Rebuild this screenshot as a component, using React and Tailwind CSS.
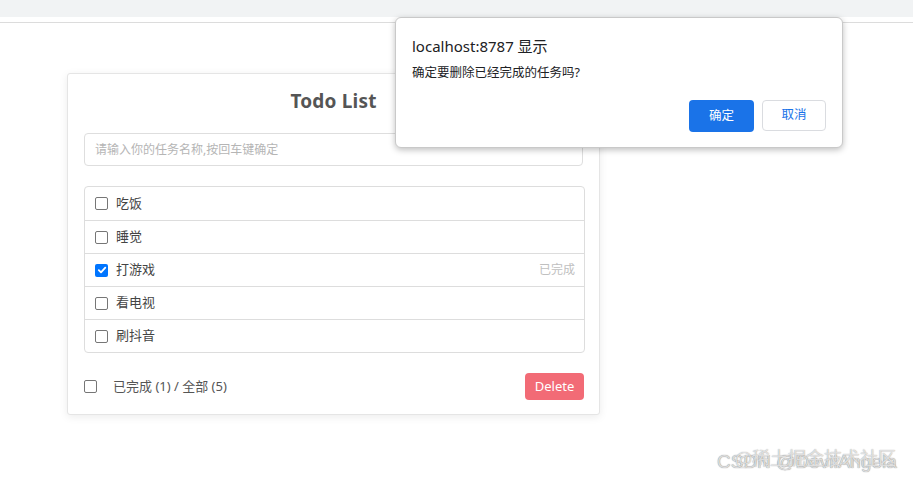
import React from "react";

const items = [
  { name: "吃饭", done: false },
  { name: "睡觉", done: false },
  { name: "打游戏", done: true },
  { name: "看电视", done: false },
  { name: "刷抖音", done: false },
];

function Box({ checked }) {
  return checked ? (
    <span className="w-[13px] h-[13px] rounded-[2px] bg-[#0075ff] flex items-center justify-center shrink-0">
      <svg width="10" height="10" viewBox="0 0 10 10">
        <path d="M1.8 5.2 L4 7.4 L8.3 2.6" fill="none" stroke="#fff" strokeWidth="1.8" strokeLinecap="round" strokeLinejoin="round" />
      </svg>
    </span>
  ) : (
    <span className="w-[13px] h-[13px] rounded-[2px] border border-[#767676] bg-white shrink-0" />
  );
}

export default function App() {
  const font = "font-['Noto_Sans','Noto_Sans_CJK_SC',sans-serif]";
  return (
    <div className={`relative w-[913px] h-[486px] bg-white overflow-hidden ${font}`}>
      <div className="h-[17px] bg-[#f1f3f4]" />
      <div className="h-[5px] bg-white" />
      <div className="h-px bg-[#dcdcdc]" />

      <div className="ml-[67px] mt-[50px] w-[533px] h-[342px] border border-[#e5e5e5] rounded-[3px] bg-white shadow-[0_2px_8px_rgba(0,0,0,0.08)] px-[16px] flex flex-col">
        <div className="h-[54px] flex items-center justify-center">
          <span className="text-[19px] font-bold text-[#555] tracking-[0.2px]">Todo List</span>
        </div>
        <div className="mt-[5px] h-[33px] w-[499px] border border-[#dedede] rounded-[4px] flex items-center px-[10px]">
          <span className="text-[12px] text-[#b5b5b5]">请输入你的任务名称,按回车键确定</span>
        </div>
        <div className="mt-[20px] w-[501px] border border-[#dddddd] rounded-[4px]">
          {items.map((it, i) => (
            <div
              key={it.name}
              className={`h-[33px] flex items-center pl-[10px] pr-[9px] ${i > 0 ? "border-t border-[#dddddd]" : ""}`}
            >
              <Box checked={it.done} />
              <span className="ml-[8px] text-[13px] text-[#444]">{it.name}</span>
              {it.done && <span className="ml-auto text-[12px] text-[#c0c0c0]">已完成</span>}
            </div>
          ))}
        </div>
        <div className="mt-[20px] flex items-center w-[501px] pr-px">
          <Box checked={false} />
          <span className="ml-[16px] text-[13px] text-[#555]">已完成 (1) / 全部 (5)</span>
          <button className="ml-auto w-[59px] h-[27px] rounded-[4px] bg-[#f26b76] text-white text-[13px] flex items-center justify-center">
            Delete
          </button>
        </div>
      </div>

      <div className="absolute left-[395px] top-[17px] w-[448px] h-[131px] bg-white border border-[#c9c9c9] rounded-[6px] shadow-[0_2px_6px_rgba(0,0,0,0.25)] px-[16px] pt-[17px] flex flex-col font-['Noto_Sans','Noto_Sans_CJK_SC',sans-serif]">
        <div className="text-[15px] leading-[22px] text-[#202124]">localhost:8787 显示</div>
        <div className="mt-[7px] text-[12.5px] leading-[18px] text-[#202124]">确定要删除已经完成的任务吗?</div>
        <div className="mt-[18px] flex justify-end gap-[8px]">
          <button className="w-[65px] h-[32px] rounded-[4px] bg-[#1a73e8] text-white text-[12.5px] flex items-center justify-center">
            确定
          </button>
          <button className="w-[64px] h-[31px] rounded-[4px] border border-[#dadce0] bg-white text-[#1a73e8] text-[12.5px] flex items-center justify-center">
            取消
          </button>
        </div>
      </div>

      <div className="absolute left-[717px] top-[449px] text-[19px] leading-[26px] text-[#dcdcdc] [text-shadow:0_0_1px_#7a7a7a] font-['Liberation_Sans','Noto_Sans_CJK_SC',sans-serif] whitespace-nowrap">
        CSDN @DevilAngela
      </div>
      <div className="absolute left-[735px] top-[445px] text-[18px] leading-[24px] text-white/70 [text-shadow:0_0_1px_#8a8a8a] font-['Noto_Sans_CJK_SC',sans-serif] whitespace-nowrap">
        @稀土掘金技术社区
      </div>
    </div>
  );
}
